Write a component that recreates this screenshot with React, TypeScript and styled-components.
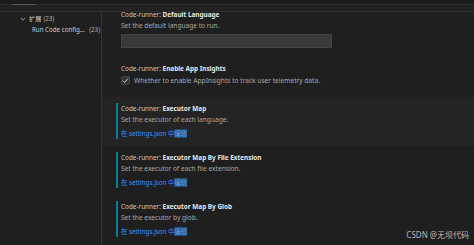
import React from "react";
import styled, { createGlobalStyle } from "styled-components";

const GlobalStyle = createGlobalStyle`
  html, body {
    margin: 0;
    padding: 0;
    background: #1f1f1f;
    width: 474px;
    height: 245px;
    overflow: hidden;
  }
  * {
    box-sizing: border-box;
  }
`;

const Window = styled.div`
  position: relative;
  width: 474px;
  height: 245px;
  background: #1f1f1f;
  font-family: "Noto Sans", "Noto Sans CJK SC", sans-serif;
  font-size: 6.6px;
  color: #cccccc;
  overflow: hidden;
  display: flex;
  flex-direction: column;
`;

const TopStrip = styled.div`
  height: 5px;
  background: #1b1b1b;
  border-bottom: 1px solid #2e2e2e;
  padding-left: 12px;
  display: flex;
  align-items: flex-end;
`;

const Indicator = styled.div`
  width: 24px;
  height: 1px;
  background: #5a5a5a;
  margin-bottom: -1px;
`;

const HeaderBand = styled.div`
  height: 7px;
  background: #222222;
  border-bottom: 1px solid #2e2e2e;
`;

const Body = styled.div`
  flex: 1;
  display: flex;
  min-height: 0;
`;

const Sidebar = styled.div`
  width: 102px;
  border-right: 1px solid #353535;
  padding-top: 1px;
  display: flex;
  flex-direction: column;
  font-size: 6.2px;
`;

const TreeRow = styled.div<{ $indent: number }>`
  display: flex;
  align-items: center;
  height: 11px;
  padding-left: ${(p) => p.$indent}px;
  padding-right: 1px;
  white-space: nowrap;
  color: #cccccc;
`;

const Chevron = styled.svg`
  width: 6px;
  height: 6px;
  margin-right: 3px;
`;

const TreeLabel = styled.span<{ $grow?: boolean }>`
  flex: ${(p) => (p.$grow ? "1 1 auto" : "0 0 auto")};
  min-width: 0;
  overflow: hidden;
  text-overflow: ellipsis;
`;

const Count = styled.span`
  flex: 0 0 auto;
  margin-left: 2px;
  color: #b4b4b4;
`;

const Content = styled.div`
  flex: 1;
  overflow: hidden;
`;

const List = styled.div`
  margin-top: -9px;
  display: flex;
  flex-direction: column;
`;

const Item = styled.div<{ $hover?: boolean; $pb: number }>`
  padding: 6px 0 ${(p) => p.$pb}px 14px;
  background: ${(p) => (p.$hover ? "#242424" : "transparent")};
`;

const ItemInner = styled.div<{ $modified?: boolean }>`
  border-left: 2px solid ${(p) => (p.$modified ? "#0c7d9d" : "transparent")};
  padding-left: 3px;
  display: flex;
  flex-direction: column;
`;

const Title = styled.div`
  line-height: 11px;
  height: 11px;
  white-space: nowrap;
  color: #c8c8c8;
  font-size: 6.4px;
`;

const TitleStrong = styled.span`
  font-weight: 700;
  color: #e7e7e7;
`;

const Description = styled.div`
  line-height: 11px;
  height: 11px;
  color: #a8a8a8;
  white-space: nowrap;
`;

const TextInput = styled.div`
  margin-top: 3px;
  width: 211px;
  height: 14px;
  background: #3a3a3a;
  border: 1px solid #444444;
`;

const CheckRow = styled.div`
  display: flex;
  align-items: center;
  height: 11px;
  margin-top: 1px;
  color: #a8a8a8;
  white-space: nowrap;
`;

const CheckBox = styled.div`
  width: 9px;
  height: 9px;
  background: #313131;
  border: 1px solid #474747;
  border-radius: 2px;
  margin-right: 4px;
  display: flex;
  align-items: center;
  justify-content: center;
`;

const EditLink = styled.div`
  margin-top: 3px;
  line-height: 11px;
  height: 11px;
  color: #3794ff;
  font-size: 6.3px;
  white-space: nowrap;
`;

const Match = styled.span`
  background: #264f78;
  color: #5aa7ff;
`;

const Watermark = styled.div`
  position: absolute;
  right: 5px;
  bottom: 5px;
  color: #b8b8b8;
  font-size: 8px;
  line-height: 10px;
`;

type MapSetting = {
  name: string;
  description: string;
  hover?: boolean;
};

const mapSettings: MapSetting[] = [
  {
    name: "Executor Map",
    description: "Set the executor of each language.",
    hover: true,
  },
  {
    name: "Executor Map By File Extension",
    description: "Set the executor of each file extension.",
  },
  {
    name: "Executor Map By Glob",
    description: "Set the executor by glob.",
  },
];

const App: React.FC = () => {
  return (
    <>
      <GlobalStyle />
      <Window>
        <TopStrip>
          <Indicator />
        </TopStrip>
        <HeaderBand />
        <Body>
          <Sidebar>
            <TreeRow $indent={20}>
              <Chevron viewBox="0 0 8 8">
                <path
                  d="M1 2.5 L4 5.5 L7 2.5"
                  fill="none"
                  stroke="#c5c5c5"
                  strokeWidth="1"
                />
              </Chevron>
              <TreeLabel>扩展</TreeLabel>
              <Count>(23)</Count>
            </TreeRow>
            <TreeRow $indent={32}>
              <TreeLabel $grow>Run Code configu...</TreeLabel>
              <Count>(23)</Count>
            </TreeRow>
          </Sidebar>
          <Content>
            <List>
              <Item $pb={9}>
                <ItemInner>
                  <Title>
                    Code-runner: <TitleStrong>Default Language</TitleStrong>
                  </Title>
                  <Description>Set the default language to run.</Description>
                  <TextInput />
                </ItemInner>
              </Item>
              <Item $pb={11}>
                <ItemInner>
                  <Title>
                    Code-runner: <TitleStrong>Enable App Insights</TitleStrong>
                  </Title>
                  <CheckRow>
                    <CheckBox>
                      <svg width="7" height="7" viewBox="0 0 8 8">
                        <path
                          d="M1 4.2 L3 6.2 L7 1.6"
                          fill="none"
                          stroke="#d0d0d0"
                          strokeWidth="1.1"
                        />
                      </svg>
                    </CheckBox>
                    Whether to enable AppInsights to track user telemetry data.
                  </CheckRow>
                </ItemInner>
              </Item>
              {mapSettings.map((s) => (
                <Item key={s.name} $hover={s.hover} $pb={7}>
                  <ItemInner $modified>
                    <Title>
                      Code-runner: <TitleStrong>{s.name}</TitleStrong>
                    </Title>
                    <Description>{s.description}</Description>
                    <EditLink>
                      在 settings.json 中<Match>编辑</Match>
                    </EditLink>
                  </ItemInner>
                </Item>
              ))}
            </List>
          </Content>
        </Body>
        <Watermark>CSDN @无坝代码</Watermark>
      </Window>
    </>
  );
};

export default App;
